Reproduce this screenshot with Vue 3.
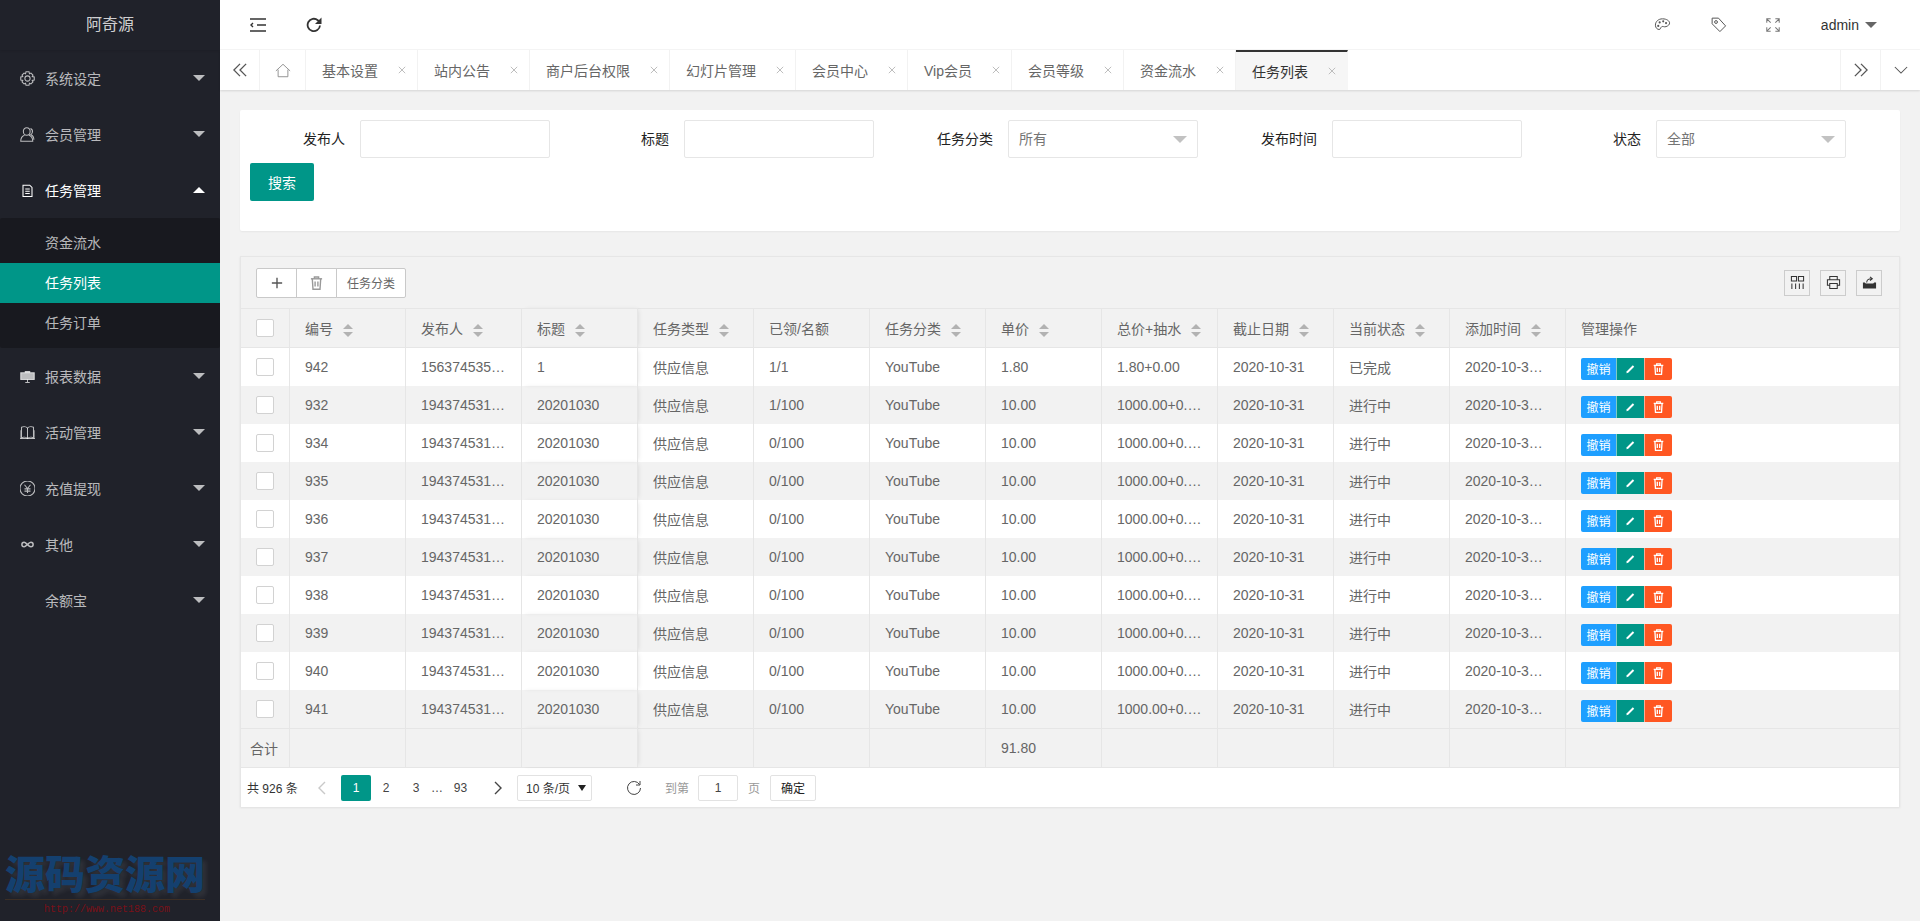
<script setup>
const navTop = [
  { label: '系统设定', icon: ['M12 8.500a3.500 3.500 0 1 0 0 7 3.500 3.500 0 0 0 0-7z', 'M10 3h4l.6 2.600 2-.9 2.700 2.700-1 2 2.700.6v4l-2.700.6 1 2-2.700 2.700-2-1L14 21h-4l-.6-2.700-2 1-2.700-2.700 1-2L3 14v-4l2.700-.6-1-2 2.700-2.700 2 .9z'] },
  { label: '会员管理', icon: ['M11 3a4.500 4.500 0 0 1 4.500 5c0 3-2 5-4.500 5s-4.500-2-4.500-5A4.500 4.500 0 0 1 11 3z', 'M8 13c-3 1-5 3-5 8h16c0-5-2-7-5-8', 'M16 4c2 1 3 3 2.500 5-.3 1.500-1 2.500-2 3.200 2.500 1 4 3.500 4 6.800'] },
  { label: '任务管理', open: true, icon: ['M6 5h9l3 3v12H6z', 'M9 10h6M9 13h6M9 16h6'] }
]
const navSub = [
  { label: '资金流水' },
  { label: '任务列表', active: true },
  { label: '任务订单' }
]
const navBottom = [
  { label: '报表数据', icon: ['M3 7h18v9H3z', 'M9 7V5.500h6V7', 'M12 16v4M9 20h6'], fill: true },
  { label: '活动管理', icon: ['M12 6c-2-2-6-2-8-1v14c2-1 6-1 8 1 2-2 6-2 8-1V5c-2-1-6-1-8 1z', 'M12 6v14', 'M2 9v11h20V9'] },
  { label: '充值提现', icon: ['M12 2a10 10 0 1 0 0 20 10 10 0 0 0 0-20z', 'M8 7l4 5 4-5M12 12v6M8 12.500h8M8 15.500h8'] },
  { label: '其他', icon: ['M7.500 9a3 3 0 1 0 0 6c2.500 0 6-6 9-6a3 3 0 1 1 0 6c-3 0-6.500-6-9-6z'], bold: true },
  { label: '余额宝' }
]
const tabs = [
  { label: '基本设置' },
  { label: '站内公告' },
  { label: '商户后台权限' },
  { label: '幻灯片管理' },
  { label: '会员中心' },
  { label: 'Vip会员' },
  { label: '会员等级' },
  { label: '资金流水' },
  { label: '任务列表', active: true }
]
const filters = [
  { label: '发布人' },
  { label: '标题' },
  { label: '任务分类', select: '所有' },
  { label: '发布时间' },
  { label: '状态', select: '全部' }
]
const columns = [
  { title: '编号', sort: true, width: 116 },
  { title: '发布人', sort: true, width: 116 },
  { title: '标题', sort: true, width: 116, edge: true },
  { title: '任务类型', sort: true, width: 116 },
  { title: '已领/名额', width: 116 },
  { title: '任务分类', sort: true, width: 116 },
  { title: '单价', sort: true, width: 116 },
  { title: '总价+抽水', sort: true, width: 116 },
  { title: '截止日期', sort: true, width: 116 },
  { title: '当前状态', sort: true, width: 116 },
  { title: '添加时间', sort: true, width: 116 },
  { title: '管理操作', width: 333 }
]
const makeRow = (id, quota) => [
  id, '19437453188', '20201030', '供应信息', quota, 'YouTube', '10.00',
  '1000.00+0.000', '2020-10-31', '进行中', '2020-10-30 18'
]
const rows = [
  ['942', '15637453566', '1', '供应信息', '1/1', 'YouTube', '1.80', '1.80+0.00', '2020-10-31', '已完成', '2020-10-30 19'],
  makeRow('932', '1/100'),
  makeRow('934', '0/100'),
  makeRow('935', '0/100'),
  makeRow('936', '0/100'),
  makeRow('937', '0/100'),
  makeRow('938', '0/100'),
  makeRow('939', '0/100'),
  makeRow('940', '0/100'),
  makeRow('941', '0/100')
]
const trash = ['M4 6h16', 'M9 6V3.500h6V6', 'M6 6l1 15h10l1-15', 'M10 10v7M14 10v7']
</script>

<template>
  <div class="layout">
    <aside class="side">
      <div class="logo">阿奇源</div>
      <div v-for="item in navTop" :key="item.label" class="nav-item" :class="{ on: item.open }">
        <svg class="nav-icon" viewBox="2 2 20 20"><path v-for="d in item.icon" :key="d" :d="d" /></svg>
        <span>{{ item.label }}</span>
        <i class="caret" :class="{ up: item.open }"></i>
      </div>
      <div class="sub">
        <div v-for="item in navSub" :key="item.label" class="sub-item" :class="{ active: item.active }">{{ item.label }}</div>
      </div>
      <div v-for="item in navBottom" :key="item.label" class="nav-item">
        <svg v-if="item.icon" class="nav-icon" :class="{ solid: item.fill, bold: item.bold }" viewBox="2 2 20 20"><path v-for="d in item.icon" :key="d" :d="d" /></svg>
        <span class="nav-label">{{ item.label }}</span>
        <i class="caret"></i>
      </div>
      <div class="watermark">
        <div class="wm-big">源码资源网</div>
        <div class="wm-url">http://www.net188.com</div>
      </div>
    </aside>

    <div class="main">
      <header class="top">
        <svg class="tool-icon flat" viewBox="0 0 16 14"><path d="M0 1h16M7 7h9M0 13h16M3 5L1 7l2 2" /></svg>
        <svg class="tool-icon refresh" viewBox="0 0 16 16"><path d="M14 8.500A6.200 6.200 0 1 1 11.800 3.200L14 5.500" /><path class="fill" d="M15.500 .5v6.500H9z" /></svg>
        <div class="top-right">
          <svg class="right-icon" viewBox="0 0 24 24"><path d="M12 4C6 4 2 8 2 13c0 4 3 6 5 6 3 0 2-3 4-4 2-1 3 1 6 0 3-1 5-3 5-5 0-3-4-6-10-6z" /><circle class="fill" cx="8" cy="9" r="1.500" /><circle class="fill" cx="13" cy="7.500" r="1.500" /><circle class="fill" cx="17" cy="10" r="1.500" /><circle class="fill" cx="6" cy="14" r="1.500" /></svg>
          <svg class="right-icon" viewBox="0 0 24 24"><path d="M3 3h9l10 11-8 8L3 11z" /><circle cx="8.500" cy="8.500" r="2" /></svg>
          <svg class="right-icon light" viewBox="3 3 18 18"><path d="M4 9V4h5M20 9V4h-5M4 15v5h5M20 15v5h-5M4 4l5 5M20 4l-5 5M4 20l5-5M20 20l-5-5" /></svg>
          <span class="admin">admin</span>
          <i class="admin-caret"></i>
        </div>
      </header>

      <nav class="tabs">
        <div class="tab-btn">
          <svg class="chev" viewBox="0 0 16 16"><path d="M8 1L1 8l7 7M15 1L8 8l7 7" /></svg>
        </div>
        <div class="tab-home">
          <svg class="home" viewBox="0 0 18 16"><path d="M1 8.500L9 1l8 7.500M3.500 7v8h11V7" /></svg>
        </div>
        <div v-for="t in tabs" :key="t.label" class="tab" :class="{ active: t.active }">
          <span>{{ t.label }}</span>
          <svg class="tab-close" viewBox="0 0 10 10"><path d="M1 1l8 8M9 1l-8 8" /></svg>
        </div>
        <div class="tab-right">
          <div class="tab-btn">
            <svg class="chev" viewBox="0 0 16 16"><path d="M1 1l7 7-7 7M8 1l7 7-7 7" /></svg>
          </div>
          <div class="tab-btn">
            <svg class="chev thin" viewBox="0 0 16 10"><path d="M1 1l7 7 7-7" /></svg>
          </div>
        </div>
      </nav>

      <div class="content">
        <section class="search-card">
          <div class="form">
            <div v-for="f in filters" :key="f.label" class="form-item">
              <label class="form-label">{{ f.label }}</label>
              <div class="form-input" :class="{ select: f.select }">
                <span v-if="f.select">{{ f.select }}</span>
                <i v-if="f.select" class="select-caret"></i>
              </div>
            </div>
          </div>
          <button class="btn-search">搜索</button>
        </section>

        <section class="panel">
          <div class="toolbar">
            <div class="btn-group">
              <button class="group-btn">
                <svg class="plus" viewBox="0 0 14 14"><path d="M7 1v12M1 7h12" /></svg>
              </button>
              <button class="group-btn">
                <svg class="bin" viewBox="3 2 18 20"><path v-for="d in trash" :key="d" :d="d" /></svg>
              </button>
              <button class="group-btn text">任务分类</button>
            </div>
            <div class="tool-right">
              <div class="square">
                <svg viewBox="0 0 16 16"><path d="M1.500 1.500h5.500v5h-5.500zM9 1.500h5.500v5H9zM2 9v6M6 9v6M10 9v6M14 9v6" /></svg>
              </div>
              <div class="square">
                <svg viewBox="0 0 16 16"><path d="M4 5V1.500h8V5M4 11H1.500V5h13v6H12M4 9h8v5.500H4z" /></svg>
              </div>
              <div class="square">
                <svg viewBox="0 0 16 16"><path class="fill" d="M1 8h2l1 1h8l1-1h2v6.500H1z" /><path d="M5 8c0-3 2-4 5-4M8.500 2L11 4 8.500 6" /></svg>
              </div>
            </div>
          </div>

          <table class="grid">
            <colgroup>
              <col class="col-check" />
              <col v-for="c in columns" :key="c.title" :style="{ width: c.width + 'px' }" />
            </colgroup>
            <thead>
              <tr>
                <th class="check-cell"><i class="check"></i></th>
                <th v-for="c in columns" :key="c.title" :class="{ edge: c.edge }">
                  <span>{{ c.title }}</span>
                  <span v-if="c.sort" class="sort"><i class="sort-up"></i><i class="sort-down"></i></span>
                </th>
              </tr>
            </thead>
            <tbody>
              <tr v-for="row in rows" :key="row[0]">
                <td class="check-cell"><i class="check"></i></td>
                <td v-for="(val, i) in row" :key="i" :class="{ edge: i === 2 }"><div class="cell">{{ val }}</div></td>
                <td>
                  <div class="actions">
                    <button class="act blue">撤销</button>
                    <button class="act teal">
                      <svg viewBox="0 0 12 12"><path class="pen" d="M2 8.500L8.500 2 10 3.500 3.500 10 1.500 10.500z" /></svg>
                    </button>
                    <button class="act orange">
                      <svg viewBox="3 2 18 20"><path v-for="d in trash" :key="d" :d="d" /></svg>
                    </button>
                  </div>
                </td>
              </tr>
              <tr class="total">
                <td class="total-label">合计</td>
                <td v-for="c in 6" :key="c" :class="{ edge: c === 3 }"></td>
                <td><div class="cell">91.80</div></td>
                <td v-for="c in 5" :key="'t' + c"></td>
              </tr>
            </tbody>
          </table>

          <div class="pager">
            <span class="count">共 926 条</span>
            <svg class="page-arrow prev" viewBox="0 0 10 16"><path d="M8 2L2 8l6 6" /></svg>
            <span class="page current">1</span>
            <span class="page">2</span>
            <span class="page">3</span>
            <span class="dots">…</span>
            <span class="page last">93</span>
            <svg class="page-arrow next" viewBox="0 0 10 16"><path d="M2 2l6 6-6 6" /></svg>
            <div class="limit"><span>10 条/页</span><i class="limit-caret"></i></div>
            <svg class="page-refresh" viewBox="0 0 16 16"><path d="M13.500 4.500A6.500 6.500 0 1 0 14.500 8" /><path d="M14 1v4h-4" /></svg>
            <span class="to">到第</span>
            <div class="jump">1</div>
            <span class="to page-word">页</span>
            <button class="confirm">确定</button>
          </div>
        </section>
      </div>
    </div>
  </div>
</template>

<style>
body {
  margin: 0;
  background: #f2f2f2;
  overflow: hidden;
}
</style>

<style scoped>
.layout {
  display: flex;
  height: 921px;
  font-family: "Liberation Sans", "Noto Sans CJK SC", sans-serif;
  font-size: 14px;
  color: #666;
}

button {
  font-family: inherit;
  cursor: pointer;
}

svg path,
svg circle {
  fill: none;
  stroke: currentColor;
}

svg .fill {
  fill: currentColor;
  stroke: none;
}

/* sidebar */
.side {
  position: relative;
  width: 220px;
  flex: none;
  background: #20222a;
  color: rgba(255, 255, 255, 0.7);
  overflow: hidden;
}

.logo {
  height: 50px;
  line-height: 50px;
  text-align: center;
  font-size: 16px;
  color: rgba(255, 255, 255, 0.8);
  box-shadow: 0 1px 2px rgba(0, 0, 0, 0.1);
}

.nav-item {
  position: relative;
  display: flex;
  align-items: center;
  height: 56px;
  padding-left: 20px;
}

.nav-item.on {
  color: #fff;
}

.nav-icon {
  width: 15px;
  height: 15px;
  margin-right: 10px;
  flex: none;
  stroke-width: 1.4;
}

.nav-icon.solid path {
  fill: currentColor;
}

.nav-icon.bold {
  stroke-width: 2;
}

.nav-label:first-child {
  margin-left: 25px;
}

.caret {
  position: absolute;
  right: 15px;
  top: 25px;
  border: 6px solid transparent;
  border-bottom-width: 0;
  border-top-color: rgba(255, 255, 255, 0.7);
}

.caret.up {
  border-top-width: 0;
  border-bottom-width: 6px;
  border-top-color: transparent;
  border-bottom-color: #fff;
}

.sub {
  padding: 5px 0;
  background: #18191f;
  border-radius: 2px;
}

.sub-item {
  height: 40px;
  line-height: 40px;
  padding-left: 45px;
}

.sub-item.active {
  background: #009688;
  color: #fff;
}

.watermark {
  position: absolute;
  left: 5px;
  top: 853px;
  width: 200px;
  pointer-events: none;
}

.wm-big {
  height: 46px;
  line-height: 44px;
  font-size: 40px;
  font-weight: 900;
  white-space: nowrap;
  color: #14406f;
  text-shadow: 4px 4px 4px rgba(255, 255, 255, 0.07);
  border-bottom: 1px solid #3d2f25;
}

.wm-url {
  margin-top: 3px;
  padding-left: 39px;
  font-family: "Liberation Mono", monospace;
  font-size: 10px;
  line-height: 14px;
  color: #7a1018;
}

/* header */
.main {
  flex: 1;
  min-width: 0;
  display: flex;
  flex-direction: column;
}

.top {
  display: flex;
  align-items: center;
  height: 49px;
  flex: none;
  padding-left: 30px;
  background: #fff;
  border-bottom: 1px solid #f6f6f6;
  color: #333;
}

.tool-icon {
  flex: none;
}

.tool-icon.flat {
  width: 16px;
  height: 14px;
  stroke-width: 1.4;
}

.tool-icon.refresh {
  width: 16px;
  height: 16px;
  margin-left: 40px;
  stroke-width: 1.8;
}

.top-right {
  display: flex;
  align-items: center;
  margin-left: auto;
  padding-right: 43px;
}

.right-icon {
  width: 17px;
  height: 17px;
  margin-right: 39px;
  stroke-width: 1.4;
  color: #555;
}

.right-icon.light {
  width: 14px;
  height: 14px;
  margin-right: 41px;
  stroke-width: 1.3;
  color: #777;
}

.admin {
  color: #333;
}

.admin-caret {
  margin-left: 6px;
  border: 6px solid transparent;
  border-bottom-width: 0;
  border-top-color: #666;
}

/* tabs */
.tabs {
  position: relative;
  display: flex;
  height: 40px;
  flex: none;
  background: #fff;
  box-shadow: 0 1px 2px rgba(0, 0, 0, 0.12);
}

.tab-btn,
.tab-home {
  display: flex;
  align-items: center;
  justify-content: center;
  width: 39px;
  height: 40px;
  border-right: 1px solid #f2f2f2;
  color: #555;
}

.tab-home {
  width: 46px;
  box-sizing: border-box;
  color: #888;
}

.chev {
  width: 14px;
  height: 14px;
  stroke-width: 1.5;
}

.chev.thin {
  height: 9px;
  stroke-width: 1.2;
}

.home {
  width: 16px;
  height: 15px;
  stroke-width: 1;
}

.tab {
  display: flex;
  align-items: center;
  box-sizing: border-box;
  height: 40px;
  padding: 0 11px 0 16px;
  gap: 20px;
  border-right: 1px solid #f2f2f2;
  color: #666;
}

.tab.active {
  background: #f6f6f6;
  border-top: 2px solid #333;
  border-right-color: #f6f6f6;
  color: #333;
}

.tab-close {
  width: 8px;
  height: 8px;
  color: #bbb;
  stroke-width: 1.2;
}

.tab-right {
  display: flex;
  margin-left: auto;
}

.tab-right .tab-btn {
  border-right: 0;
  border-left: 1px solid #f2f2f2;
}

/* content */
.content {
  flex: 1;
  padding: 20px;
  background: #f2f2f2;
}

.search-card {
  box-sizing: border-box;
  height: 121px;
  padding: 10px;
  background: #fff;
  border-radius: 2px;
  box-shadow: 0 1px 2px rgba(0, 0, 0, 0.05);
}

.form {
  display: flex;
}

.form-item {
  display: flex;
  margin-right: 24px;
}

.form-item:last-child {
  margin-right: 0;
}

.form-label {
  box-sizing: border-box;
  width: 110px;
  padding-right: 15px;
  line-height: 38px;
  text-align: right;
  color: #222;
}

.form-input {
  position: relative;
  box-sizing: border-box;
  width: 190px;
  height: 38px;
  line-height: 36px;
  padding-left: 10px;
  border: 1px solid #e6e6e6;
  border-radius: 2px;
  background: #fff;
  color: #757575;
}

.select-caret {
  position: absolute;
  right: 10px;
  top: 15px;
  border: 7px solid transparent;
  border-bottom-width: 0;
  border-top-color: #c2c2c2;
}

.btn-search {
  display: block;
  width: 64px;
  height: 38px;
  margin-top: 5px;
  padding: 0;
  border: 0;
  border-radius: 2px;
  background: #009688;
  color: #fff;
  font-size: 14px;
}

.panel {
  margin-top: 25px;
  box-sizing: border-box;
  width: 1660px;
  background: #f2f2f2;
  border: 1px solid #e6e6e6;
  border-bottom: 0;
  box-shadow: 0 1px 2px rgba(0, 0, 0, 0.08);
}

.toolbar {
  display: flex;
  align-items: center;
  justify-content: space-between;
  box-sizing: border-box;
  height: 51px;
  padding: 0 17px 0 15px;
}

.btn-group {
  display: flex;
  height: 30px;
}

.group-btn {
  display: flex;
  align-items: center;
  justify-content: center;
  box-sizing: border-box;
  width: 41px;
  height: 30px;
  margin-left: -1px;
  padding: 0;
  border: 1px solid #c9c9c9;
  background: #fff;
  color: #555;
  font-size: 12px;
}

.group-btn:first-child {
  margin-left: 0;
  border-radius: 2px 0 0 2px;
}

.group-btn:last-child {
  border-radius: 0 2px 2px 0;
}

.group-btn.text {
  width: 70px;
  color: #666;
}

.plus {
  width: 12px;
  height: 12px;
  stroke-width: 1.6;
}

.bin {
  width: 13px;
  height: 14px;
  color: #999;
  stroke-width: 2;
}

.tool-right {
  display: flex;
  gap: 10px;
}

.square {
  display: flex;
  align-items: center;
  justify-content: center;
  box-sizing: border-box;
  width: 26px;
  height: 26px;
  border: 1px solid #ccc;
  color: #333;
}

.square svg {
  width: 15px;
  height: 15px;
  stroke-width: 1.1;
}

.grid {
  width: 1658px;
  table-layout: fixed;
  border-collapse: separate;
  border-spacing: 0;
}

.col-check {
  width: 49px;
}

.grid th,
.grid td {
  box-sizing: border-box;
  height: 38px;
  padding: 0 15px;
  border-right: 1px solid #e6e6e6;
  font-weight: 400;
  font-size: 14px;
  text-align: left;
  color: #666;
  white-space: nowrap;
}

.grid th {
  height: 40px;
  border-top: 1px solid #e6e6e6;
  border-bottom: 1px solid #e6e6e6;
}

.grid th:last-child,
.grid td:last-child {
  border-right: 0;
}

.grid tbody tr:nth-child(odd) td {
  background: #fff;
}

.grid tbody tr.total td {
  height: 39px;
  background: #f2f2f2;
  border-top: 1px solid #e6e6e6;
}

.grid .edge {
  position: relative;
  box-shadow: 2px 0 5px -2px rgba(0, 0, 0, 0.12);
}

.grid .check-cell {
  padding: 0 0 0 15px;
}

.grid .total-label {
  padding: 0 0 0 9px;
}

.check {
  display: block;
  box-sizing: border-box;
  width: 18px;
  height: 18px;
  background: #fff;
  border: 1px solid #d2d2d2;
  border-radius: 2px;
}

.cell {
  overflow: hidden;
  text-overflow: ellipsis;
}

.sort {
  display: inline-block;
  position: relative;
  width: 10px;
  height: 13px;
  margin-left: 10px;
  vertical-align: middle;
}

.sort-up,
.sort-down {
  position: absolute;
  left: 0;
  border: 5px solid transparent;
}

.sort-up {
  top: 0;
  border-top-width: 0;
  border-bottom-color: #b2b2b2;
}

.sort-down {
  bottom: 0;
  border-bottom-width: 0;
  border-top-color: #b2b2b2;
}

.actions {
  display: flex;
  height: 22px;
  margin-top: 3px;
}

.act {
  display: flex;
  align-items: center;
  justify-content: center;
  width: 28px;
  height: 22px;
  padding: 0;
  border: 0;
  border-left: 1px solid rgba(255, 255, 255, 0.5);
  color: #fff;
  font-size: 12px;
}

.act svg {
  width: 11px;
  height: 12px;
  stroke-width: 2.2;
}

.act .pen {
  fill: currentColor;
  stroke: none;
}

.act.blue {
  width: 35px;
  border-left: 0;
  border-radius: 2px 0 0 2px;
  background: #1e9fff;
}

.act.teal {
  background: #009688;
}

.act.orange {
  border-radius: 0 2px 2px 0;
  background: #ff5722;
}

/* pager */
.pager {
  display: flex;
  align-items: center;
  box-sizing: border-box;
  height: 40px;
  padding-left: 6px;
  background: #fff;
  border-top: 1px solid #e6e6e6;
  font-size: 12px;
  color: #666;
  white-space: nowrap;
}

.count {
  width: 52px;
  color: #333;
}

.page-arrow {
  width: 10px;
  height: 16px;
  stroke-width: 1.4;
  flex: none;
}

.page-arrow.prev {
  margin-left: 18px;
  color: #c9c9c9;
}

.page-arrow.next {
  margin: 0 14px 0 15px;
  color: #444;
}

.page {
  width: 30px;
  height: 26px;
  line-height: 26px;
  text-align: center;
  color: #444;
}

.page.current {
  margin-left: 14px;
  background: #009688;
  border-radius: 2px;
  color: #fff;
}

.page.last {
  width: 35px;
}

.dots {
  width: 12px;
  text-align: center;
  color: #444;
}

.limit {
  display: flex;
  align-items: center;
  justify-content: space-between;
  box-sizing: border-box;
  width: 75px;
  height: 26px;
  padding: 0 5px 0 8px;
  background: #fff;
  border: 1px solid #e2e2e2;
  border-radius: 2px;
  color: #333;
}

.limit-caret {
  border: 4px solid transparent;
  border-bottom-width: 0;
  border-top: 6px solid #222;
}

.page-refresh {
  width: 16px;
  height: 16px;
  margin-left: 34px;
  flex: none;
  color: #444;
  stroke-width: 1;
}

.to {
  margin-left: 23px;
  color: #999;
}

.jump {
  box-sizing: border-box;
  width: 40px;
  height: 26px;
  line-height: 24px;
  margin-left: 9px;
  text-align: center;
  background: #fff;
  border: 1px solid #e2e2e2;
  border-radius: 2px;
  color: #444;
}

.to.page-word {
  margin-left: 10px;
}

.confirm {
  box-sizing: border-box;
  width: 46px;
  height: 26px;
  margin-left: 10px;
  padding: 0;
  background: #fff;
  border: 1px solid #e2e2e2;
  border-radius: 2px;
  color: #222;
  font-size: 12px;
}
</style>
